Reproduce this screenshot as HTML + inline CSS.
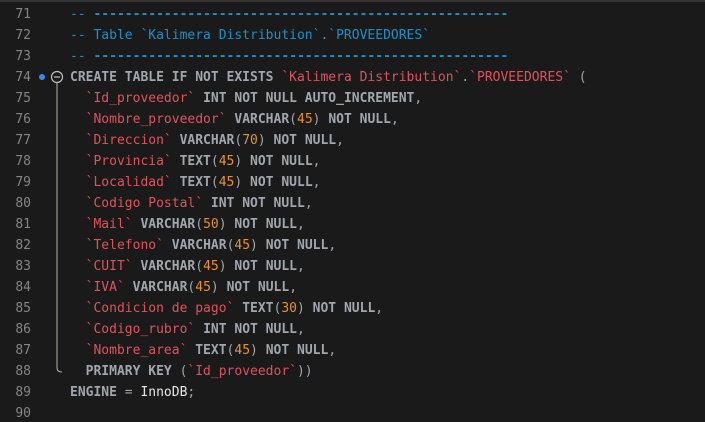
<!DOCTYPE html><html><head><style>
html,body{margin:0;padding:0;background:#1a1a1a;width:705px;height:422px;overflow:hidden}
body{border-top:2px solid #333;box-sizing:border-box;position:relative;font-family:"DejaVu Sans Mono","Liberation Mono",monospace;font-size:13px}
.l{position:absolute;left:0;height:21px;line-height:21px;white-space:pre;width:705px}
.n{position:absolute;left:0;width:31px;text-align:right;color:#858585}
.c{position:absolute;left:70px;color:#a0a6ad}
.k{font-weight:bold;color:#a0a6ad}
.s{color:#e0525b}
.num{color:#e8912d}
.cm{color:#1b90cc}
.d{display:inline-block;transform:scaleX(1.0);font-weight:bold}
.w{color:#e6e6e6}
</style></head><body>
<div class="l" style="top:2px"><span class="n">71</span><span class="c cm">-- <span class="d">-----------------------------------------------------</span></span></div>
<div class="l" style="top:23px"><span class="n">72</span><span class="c cm">-- Table `Kalimera Distribution`.`PROVEEDORES`</span></div>
<div class="l" style="top:44px"><span class="n">73</span><span class="c cm">-- <span class="d">-----------------------------------------------------</span></span></div>
<div class="l" style="top:65px"><span class="n">74</span><span class="c"><span class="k">CREATE TABLE IF NOT EXISTS</span> <span class="s">`Kalimera Distribution`</span>.<span class="s">`PROVEEDORES`</span> (</span></div>
<div class="l" style="top:86px"><span class="n">75</span><span class="c">  <span class="s">`Id_proveedor`</span> <span class="k">INT NOT NULL AUTO_INCREMENT</span>,</span></div>
<div class="l" style="top:107px"><span class="n">76</span><span class="c">  <span class="s">`Nombre_proveedor`</span> <span class="k">VARCHAR</span>(<span class="num">45</span>) <span class="k">NOT NULL</span>,</span></div>
<div class="l" style="top:128px"><span class="n">77</span><span class="c">  <span class="s">`Direccion`</span> <span class="k">VARCHAR</span>(<span class="num">70</span>) <span class="k">NOT NULL</span>,</span></div>
<div class="l" style="top:149px"><span class="n">78</span><span class="c">  <span class="s">`Provincia`</span> <span class="k">TEXT</span>(<span class="num">45</span>) <span class="k">NOT NULL</span>,</span></div>
<div class="l" style="top:170px"><span class="n">79</span><span class="c">  <span class="s">`Localidad`</span> <span class="k">TEXT</span>(<span class="num">45</span>) <span class="k">NOT NULL</span>,</span></div>
<div class="l" style="top:191px"><span class="n">80</span><span class="c">  <span class="s">`Codigo Postal`</span> <span class="k">INT NOT NULL</span>,</span></div>
<div class="l" style="top:212px"><span class="n">81</span><span class="c">  <span class="s">`Mail`</span> <span class="k">VARCHAR</span>(<span class="num">50</span>) <span class="k">NOT NULL</span>,</span></div>
<div class="l" style="top:233px"><span class="n">82</span><span class="c">  <span class="s">`Telefono`</span> <span class="k">VARCHAR</span>(<span class="num">45</span>) <span class="k">NOT NULL</span>,</span></div>
<div class="l" style="top:254px"><span class="n">83</span><span class="c">  <span class="s">`CUIT`</span> <span class="k">VARCHAR</span>(<span class="num">45</span>) <span class="k">NOT NULL</span>,</span></div>
<div class="l" style="top:275px"><span class="n">84</span><span class="c">  <span class="s">`IVA`</span> <span class="k">VARCHAR</span>(<span class="num">45</span>) <span class="k">NOT NULL</span>,</span></div>
<div class="l" style="top:296px"><span class="n">85</span><span class="c">  <span class="s">`Condicion de pago`</span> <span class="k">TEXT</span>(<span class="num">30</span>) <span class="k">NOT NULL</span>,</span></div>
<div class="l" style="top:317px"><span class="n">86</span><span class="c">  <span class="s">`Codigo_rubro`</span> <span class="k">INT NOT NULL</span>,</span></div>
<div class="l" style="top:338px"><span class="n">87</span><span class="c">  <span class="s">`Nombre_area`</span> <span class="k">TEXT</span>(<span class="num">45</span>) <span class="k">NOT NULL</span>,</span></div>
<div class="l" style="top:359px"><span class="n">88</span><span class="c">  <span class="k">PRIMARY KEY</span> (<span class="s">`Id_proveedor`</span>))</span></div>
<div class="l" style="top:380px"><span class="n">89</span><span class="c"><span class="k">ENGINE</span> = <span class="w">InnoDB</span>;</span></div>
<div class="l" style="top:401px"><span class="n">90</span></div>
<svg style="position:absolute;left:0;top:0" width="80" height="422">
<circle cx="42" cy="75" r="3" fill="#2f8ff0"/>
<circle cx="57" cy="75" r="5.5" fill="none" stroke="#c0c0c0" stroke-width="1.2"/>
<line x1="54" y1="75" x2="60" y2="75" stroke="#c0c0c0" stroke-width="1.2"/>
<path d="M57 81 V366 Q57 370 62 370" fill="none" stroke="#b9b59a" stroke-width="1"/>
</svg>
</body></html>
